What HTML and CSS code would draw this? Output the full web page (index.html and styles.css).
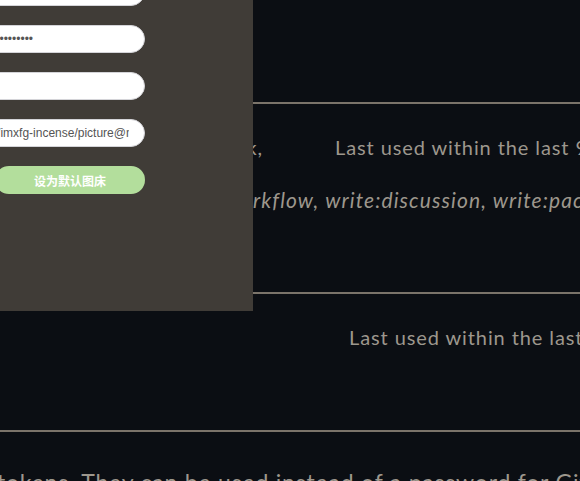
FILE: index.html
```html
<!DOCTYPE html>
<html lang="en">
<head>
<meta charset="utf-8">
<title>Personal access tokens</title>
<link rel="stylesheet" href="styles.css">
</head>
<body>
<main class="page">
  <div class="token-list">
    <div class="token-row">
      <div class="token-main">
        <div class="token-name"><span class="lead-text">picgo — admin:org_hook, admin:public_key, admin:repo_hook,</span></div>
        <div class="last-used">Last used within the last 90 days</div>
      </div>
      <div class="token-scopes"><span class="scopes-lead"><span class="lead-text">repo, wo</span></span><span class="scopes-rest">rkflow, write:discussion, write:packages</span></div>
    </div>
    <div class="token-row token-row-short">
      <div class="token-main">
        <div class="token-name token-name-empty"></div>
        <div class="last-used last-used-wide">Last used within the last week</div>
      </div>
    </div>
  </div>
  <p class="token-note"><span class="note-lead"><span class="lead-text">Personal access tokens function like ordinary OAuth access</span></span><span class="note-rest">tokens. They can be used instead of a password for Git over HTTPS.</span></p>
</main>

<aside class="picbed-panel">
  <form class="picbed-form">
    <input class="field" type="text" value="imxfg-incense/picture">
    <input class="field" type="password" value="ghp_2f8XkQ7Lm0pR4sT9vW1yZ3bC5dE6gH8jK0nA">
    <input class="field" type="text" value="">
    <input class="field" type="text" value="https://cdn.jsdelivr.net/gh/imxfg-incense/picture@main">
    <button class="set-default" type="button">设为默认图床</button>
  </form>
</aside>
</body>
</html>
```

FILE: styles.css
```css
html, body {
  margin: 0;
  padding: 0;
}

body {
  width: 580px;
  height: 481px;
  overflow: hidden;
  background: #0b0e13;
  color: #9d978d;
  font-family: "Lato", "Open Sans", sans-serif;
  font-size: 20px;
  letter-spacing: 0.9px;
  position: relative;
}

.page {
  padding-top: 102px;
}

.token-row {
  border-top: 2px solid #7b746a;
  height: 190px;
  padding-top: 28px;
  box-sizing: border-box;
}

.token-row-short {
  height: 138px;
}

.token-main {
  display: flex;
  line-height: 30px;
  white-space: nowrap;
}

.token-name {
  width: 263px;
  flex: none;
  display: flex;
  justify-content: flex-end;
  overflow: hidden;
}

.lead-text {
  flex: none;
  white-space: nowrap;
}

.last-used {
  margin-left: 72px;
}

.last-used-wide {
  margin-left: 86px;
}

.token-scopes {
  display: flex;
  margin-top: 23px;
  line-height: 30px;
  font-size: 21px;
  letter-spacing: 1.1px;
  font-style: italic;
  white-space: nowrap;
}

.scopes-lead {
  width: 253px;
  flex: none;
  display: flex;
  justify-content: flex-end;
  overflow: hidden;
}

.scopes-rest {
  flex: none;
}

.token-note {
  display: flex;
  margin: 0;
  border-top: 2px solid #7b746a;
  padding-top: 35px;
  line-height: 30px;
  font-size: 23px;
  letter-spacing: 0.8px;
  white-space: nowrap;
}

.note-lead {
  width: 0;
  flex: none;
  display: flex;
  justify-content: flex-end;
}

.note-rest {
  flex: none;
  margin-left: -3px;
}

.picbed-panel {
  position: absolute;
  left: -146px;
  top: -22px;
  width: 399px;
  height: 333px;
  background: #403c37;
  letter-spacing: 0;
}

.picbed-form {
  width: 291px;
  display: flex;
  flex-direction: column;
  align-items: flex-end;
  gap: 19px;
}

.field {
  box-sizing: border-box;
  width: 291px;
  height: 28px;
  margin: 0;
  border: 1px solid #d4d4d8;
  border-radius: 14px;
  background: #fff;
  padding: 0 15px 0 10px;
  font-family: "Liberation Sans", Arial, sans-serif;
  font-size: 12px;
  color: #555;
  outline: none;
}

.set-default {
  box-sizing: border-box;
  width: 150px;
  height: 28px;
  margin: 0;
  border: none;
  border-radius: 14px;
  background: #b3de9c;
  color: #fff;
  font-family: "Noto Sans CJK SC", sans-serif;
  font-size: 12px;
  font-weight: 700;
}
```
